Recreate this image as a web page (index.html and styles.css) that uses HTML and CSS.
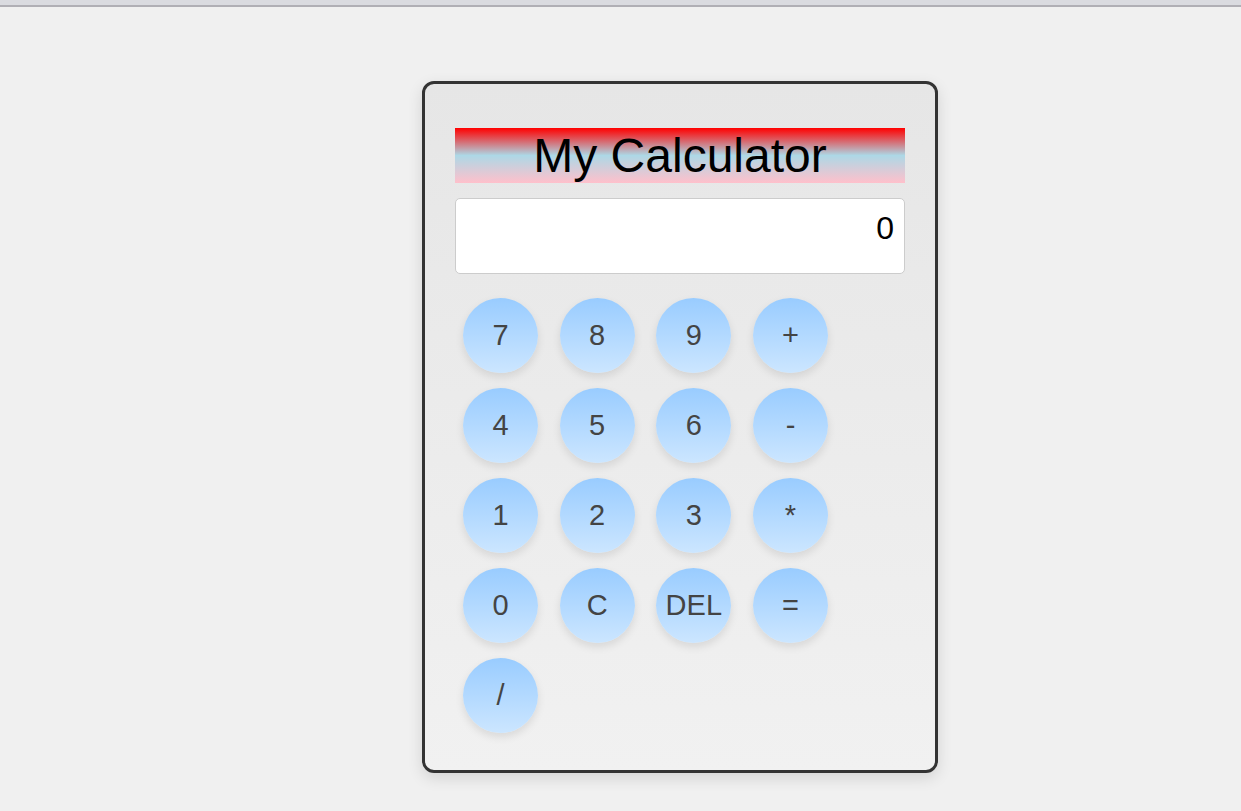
FILE: index.html
```html
<!DOCTYPE html>
<html lang="en">
<head>
<meta charset="utf-8">
<title>My Calculator</title>
<link rel="stylesheet" href="styles.css">
</head>
<body>
<div class="topbar"></div>
<main class="page">
  <div class="calculator">
    <h1 class="title">My Calculator</h1>
    <div class="display">0</div>
    <div class="keys">
      <button class="key">7</button>
      <button class="key">8</button>
      <button class="key">9</button>
      <button class="key">+</button>
      <button class="key">4</button>
      <button class="key">5</button>
      <button class="key">6</button>
      <button class="key">-</button>
      <button class="key">1</button>
      <button class="key">2</button>
      <button class="key">3</button>
      <button class="key">*</button>
      <button class="key">0</button>
      <button class="key">C</button>
      <button class="key">DEL</button>
      <button class="key">=</button>
      <button class="key">/</button>
    </div>
  </div>
</main>
</body>
</html>
```

FILE: styles.css
```css
* { box-sizing: border-box; }

html, body {
  margin: 0;
  padding: 0;
}

body {
  background: #f0f0f0;
  font-family: "Liberation Sans", Arial, sans-serif;
  height: 811px;
  overflow: hidden;
}

.topbar {
  height: 7px;
  background: #dadbe0;
  border-bottom: 2px solid #b0afb5;
}

.page {
  padding: 74px 0 0 422px;
}

.calculator {
  width: 516px;
  border: 3px solid #333;
  border-radius: 12px;
  padding: 44px 30px 37px;
  background: linear-gradient(to bottom, #e6e6e6, #f1f1f1);
  box-shadow: 0 5px 15px rgba(0, 0, 0, 0.12);
}

.title {
  margin: 0 0 15px;
  height: 55px;
  font-size: 48px;
  font-weight: normal;
  line-height: 55px;
  text-align: center;
  color: #000;
  background: linear-gradient(to bottom, red, lightblue, pink);
}

.display {
  height: 76px;
  background: #fff;
  border: 1px solid #ccc;
  border-radius: 5px;
  padding: 11px 10px 9px;
  font-size: 32px;
  line-height: 37px;
  text-align: right;
  color: #000;
}

.keys {
  margin-top: 24px;
  padding-left: 8px;
  display: grid;
  grid-template-columns: repeat(4, 75px);
  column-gap: 21.67px;
  row-gap: 15px;
}

.key {
  width: 75px;
  height: 75px;
  border: none;
  border-radius: 50%;
  padding: 0;
  display: flex;
  align-items: center;
  justify-content: center;
  font-family: "Liberation Sans", Arial, sans-serif;
  font-size: 29px;
  color: #444;
  background: linear-gradient(to bottom, #99ccff, #cce6ff);
  box-shadow: 0 4px 8px rgba(0, 0, 0, 0.1);
  cursor: pointer;
}
```
